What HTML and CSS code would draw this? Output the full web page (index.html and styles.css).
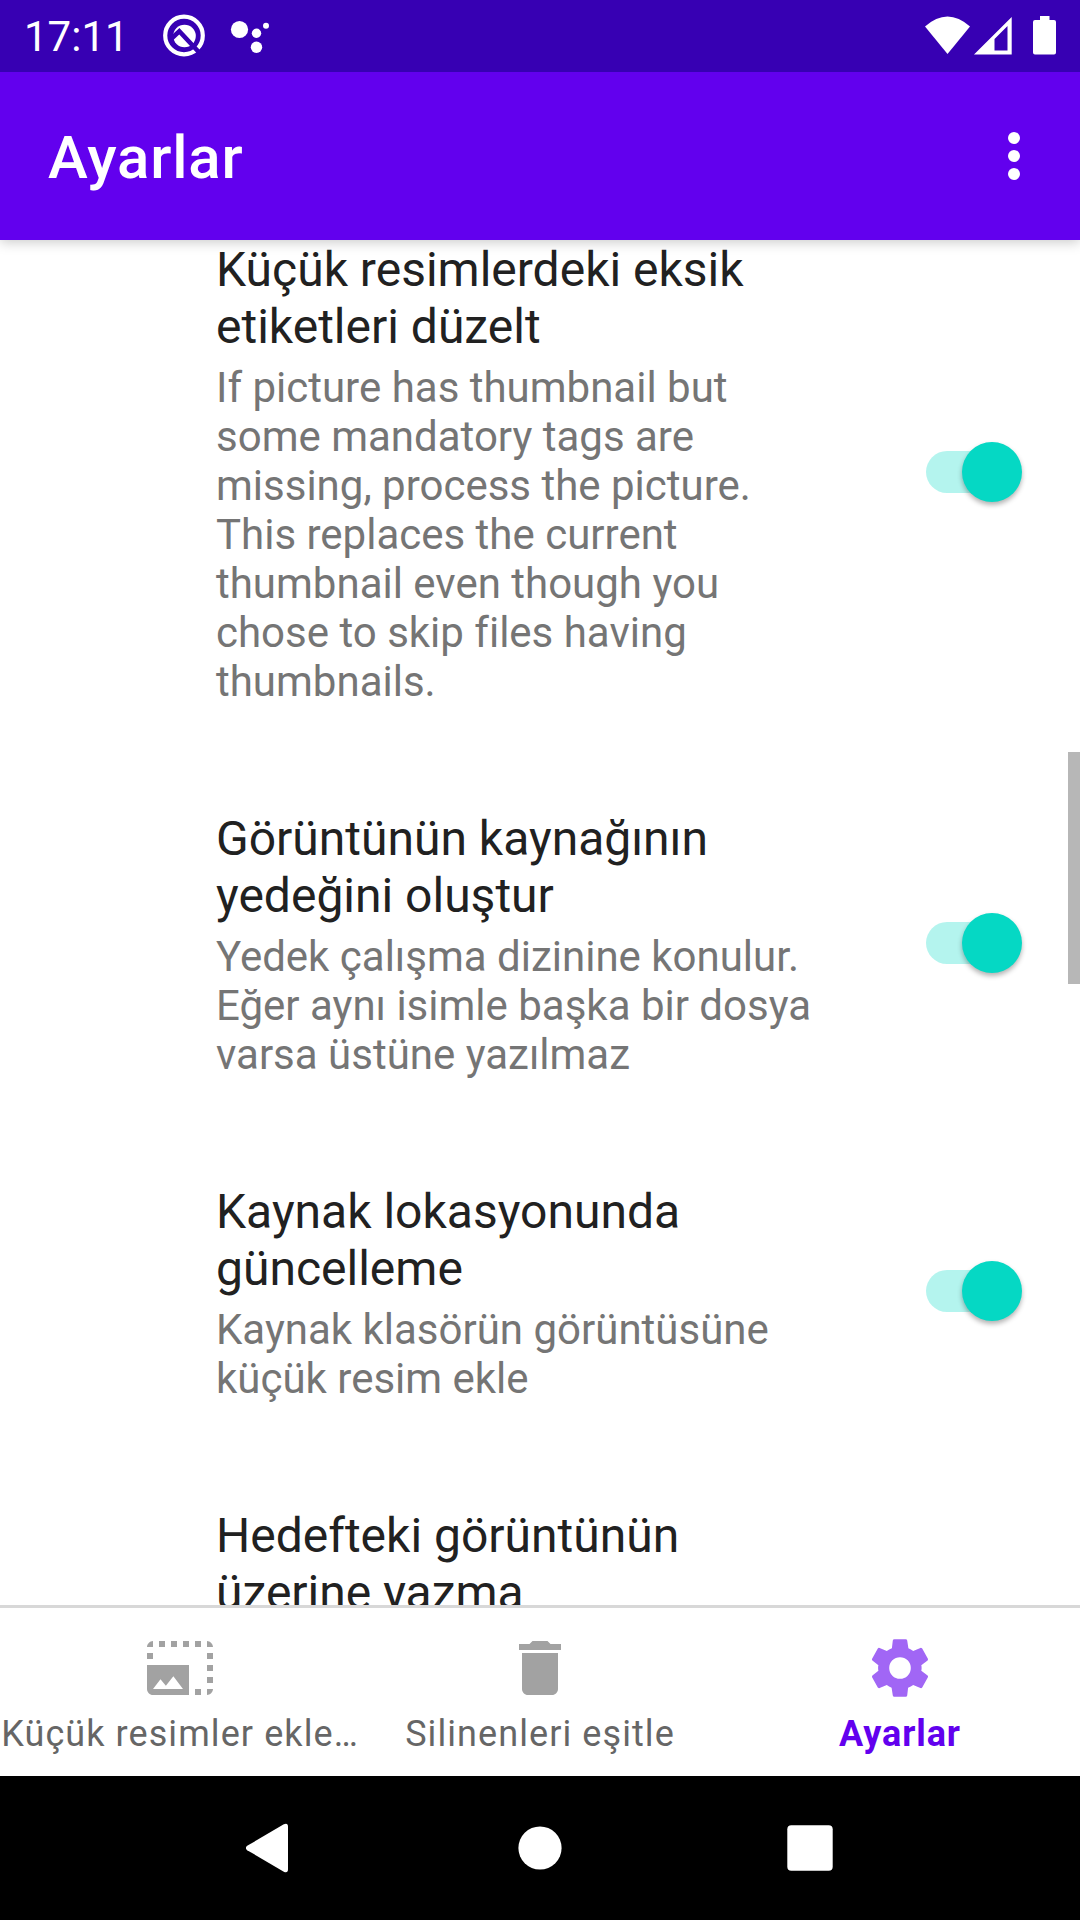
FILE: index.html
```html
<!DOCTYPE html>
<html lang="tr">
<head>
<meta charset="utf-8">
<title>Ayarlar</title>
<link rel="stylesheet" href="styles.css">
</head>
<body>
<div class="screen">
  <div class="status-bar">
    <span class="clock">17:11</span>
    <svg class="status-left" width="120" height="72" viewBox="155 0 120 72" fill="#fff">
      <circle cx="184" cy="35.5" r="18.8" fill="none" stroke="#fff" stroke-width="4.2"/>
      <circle cx="184.500" cy="36" r="11.300"/>
      <path d="M171 39L179.300 31.300L202 55.500" fill="none" stroke="#3700b3" stroke-width="4.600"/>
      <circle cx="239.500" cy="29.500" r="8.600"/>
      <circle cx="256.500" cy="33.200" r="4.700"/>
      <circle cx="256.500" cy="47.200" r="5.700"/>
      <circle cx="266" cy="25.700" r="3"/>
    </svg>
    <svg class="status-right" width="140" height="72" viewBox="920 0 140 72" fill="#fff">
      <path d="M925 26.500Q947.500 6.500 970 26.500L947.500 54Z"/>
      <path fill-rule="evenodd" d="M974 54.500L1011.700 17V54.500ZM994.500 39V50.500H1007.500V26Z"/>
      <path d="M1040 16h9.500v4h4.500q2 0 2 2v30.500q0 2-2 2h-19q-2 0-2-2V22q0-2 2-2h5Z"/>
    </svg>
  </div>
  <header class="app-bar">
    <h1 class="app-title">Ayarlar</h1>
    <svg class="overflow" width="12" height="48" viewBox="0 0 12 48" fill="#fff">
      <circle cx="6" cy="6" r="6"/><circle cx="6" cy="24" r="6"/><circle cx="6" cy="42" r="6"/>
    </svg>
  </header>
  <main class="content">
    <div class="list">
      <section class="row">
        <div class="texts">
          <h2 class="title">Küçük resimlerdeki eksik etiketleri düzelt</h2>
          <p class="summary">If picture has thumbnail but some mandatory tags are missing, process the picture. This replaces the current thumbnail even though you chose to skip files having thumbnails.</p>
        </div>
        <div class="switch"><div class="thumb"></div></div>
      </section>
      <section class="row">
        <div class="texts">
          <h2 class="title">Görüntünün kaynağının yedeğini oluştur</h2>
          <p class="summary">Yedek çalışma dizinine konulur. Eğer aynı isimle başka bir dosya varsa üstüne yazılmaz</p>
        </div>
        <div class="switch"><div class="thumb"></div></div>
      </section>
      <section class="row">
        <div class="texts">
          <h2 class="title">Kaynak lokasyonunda güncelleme</h2>
          <p class="summary">Kaynak klasörün görüntüsüne küçük resim ekle</p>
        </div>
        <div class="switch"><div class="thumb"></div></div>
      </section>
      <section class="row">
        <div class="texts">
          <h2 class="title">Hedefteki görüntünün üzerine yazma</h2>
        </div>
      </section>
    </div>
    <div class="scrollbar"></div>
  </main>
  <nav class="tabs">
    <div class="tab">
      <svg width="72" height="72" viewBox="0 0 24 24"><path d="M21 15h2v2h-2v-2zm0-4h2v2h-2v-2zm2 8h-2v2c1 0 2-1 2-2zM13 3h2v2h-2V3zm8 4h2v2h-2V7zm0-4v2h2c0-1-1-2-2-2zM1 7h2v2H1V7zm16-4h2v2h-2V3zm0 16h2v2h-2v-2zM3 3C2 3 1 4 1 5h2V3zm6 0h2v2H9V3zM5 3h2v2H5V3zm-4 8v8c0 1.100.9 2 2 2h12V11H1zm2 8l2.500-3.210 1.790 2.150 2.500-3.220L13 19H3z"/></svg>
      <span class="tab-label">Küçük resimler ekle…</span>
    </div>
    <div class="tab">
      <svg width="72" height="72" viewBox="0 0 24 24"><path d="M6 19c0 1.100.9 2 2 2h8c1.100 0 2-.9 2-2V7H6v12zM19 4h-3.500l-1-1h-5l-1 1H5v2h14V4z"/></svg>
      <span class="tab-label">Silinenleri eşitle</span>
    </div>
    <div class="tab active">
      <svg width="72" height="72" viewBox="0 0 24 24"><path d="M19.100 12.900a2.800 2.800 0 0 0 .1-.9 2.800 2.800 0 0 0-.1-.9l2.100-1.600a.7.7 0 0 0 .1-.6L19.400 5.500a.7.7 0 0 0-.6-.2l-2.400 1a6.500 6.500 0 0 0-1.600-.9l-.4-2.600a.5.5 0 0 0-.5-.4h-3.800a.5.500 0 0 0-.5.4l-.3 2.600a6.500 6.500 0 0 0-1.700.9l-2.400-1a.5.500 0 0 0-.6.200L2.700 8.900a.5.500 0 0 0 .1.600l2 1.600a2.800 2.800 0 0 0-.1.900 2.800 2.800 0 0 0 .1.900l-2 1.600a.7.700 0 0 0-.1.600l1.900 3.400a.7.700 0 0 0 .6.200l2.400-1a6.500 6.500 0 0 0 1.600.9l.4 2.600a.5.500 0 0 0 .5.400h3.800a.5.500 0 0 0 .5-.4l.3-2.600a6.500 6.500 0 0 0 1.700-.9l2.400 1a.5.500 0 0 0 .6-.2l1.900-3.400a.5.500 0 0 0-.1-.6zM12 15.600A3.600 3.600 0 1 1 15.600 12 3.600 3.600 0 0 1 12 15.600z"/></svg>
      <span class="tab-label">Ayarlar</span>
    </div>
  </nav>
  <div class="system-nav">
    <svg width="48" height="52" viewBox="0 0 48 52" fill="#fff"><path d="M1.200 23.800L37.800 2.300Q42 .5 42 5V47Q42 51.500 37.800 49.700L1.200 28.200Q-1.500 26 1.200 23.800Z"/></svg>
    <svg width="48" height="52" viewBox="0 0 48 52" fill="#fff"><circle cx="24" cy="26" r="21.600"/></svg>
    <svg width="48" height="52" viewBox="0 0 48 52" fill="#fff"><rect x="1.300" y="3.200" width="45.400" height="45.600" rx="4"/></svg>
  </div>
</div>
</body>
</html>
```

FILE: styles.css
```css
* { box-sizing: border-box; margin: 0; padding: 0; }
body { font-family: Roboto, sans-serif; background: #fff; }
svg { display: block; flex: none; }

.screen { width: 1080px; height: 1920px; display: flex; flex-direction: column; overflow: hidden; }

.status-bar { height: 72px; flex: none; background: #3700b3; display: flex; align-items: center; padding: 0 20px 0 24px; z-index: 2; }
.clock { width: 131px; font-size: 42px; line-height: 72px; padding-top: 2px; color: #fff; }
.status-right { margin-left: auto; }

.app-bar { height: 168px; flex: none; background: #6200ee; display: flex; align-items: center; justify-content: space-between; padding: 0 60px 0 48px; box-shadow: 0 2px 12px rgba(0, 0, 0, .22); z-index: 1; }
.app-title { font-size: 60px; font-weight: 500; line-height: 70px; letter-spacing: .85px; color: #fff; padding-top: 4px; }
.overflow { align-self: flex-end; margin-bottom: 60px; }

.content { height: 1365px; flex: none; overflow: hidden; position: relative; }
.list { margin-top: -54px; }
.row { display: flex; justify-content: space-between; align-items: center; padding: 55px 58px 49px 216px; }
.texts { width: 598px; }
.title { font-size: 48px; font-weight: 400; line-height: 57px; color: #212121; }
.summary { font-size: 42px; line-height: 49px; color: #757575; margin-top: 8px; }
.switch { width: 96px; height: 42px; margin-bottom: 4px; display: flex; align-items: center; justify-content: flex-end; border-radius: 21px; background: linear-gradient(#b4f4ee, #b4f4ee) left / 70px 100% no-repeat; }
.thumb { width: 60px; height: 60px; flex: none; border-radius: 50%; background: #05d8c4; box-shadow: 0 3px 5px rgba(0, 0, 0, .3); }
.scrollbar { position: absolute; right: 0; top: 512px; width: 12px; height: 232px; background: #b7b7b7; }

.tabs { height: 171px; flex: none; border-top: 3px solid #d8d8d8; background: #fff; display: flex; }
.tab { width: 360px; padding-top: 24px; display: flex; flex-direction: column; align-items: center; gap: 9px; fill: #a2a2a2; color: #666; }
.tab-label { width: 360px; font-size: 36px; line-height: 42px; letter-spacing: 1.08px; text-align: center; white-space: nowrap; }
.active { fill: #a166f5; color: #6200ee; }
.active .tab-label { font-weight: 700; letter-spacing: .9px; }

.system-nav { height: 144px; flex: none; background: #000; display: flex; justify-content: space-between; align-items: center; padding: 0 246px; }
```
